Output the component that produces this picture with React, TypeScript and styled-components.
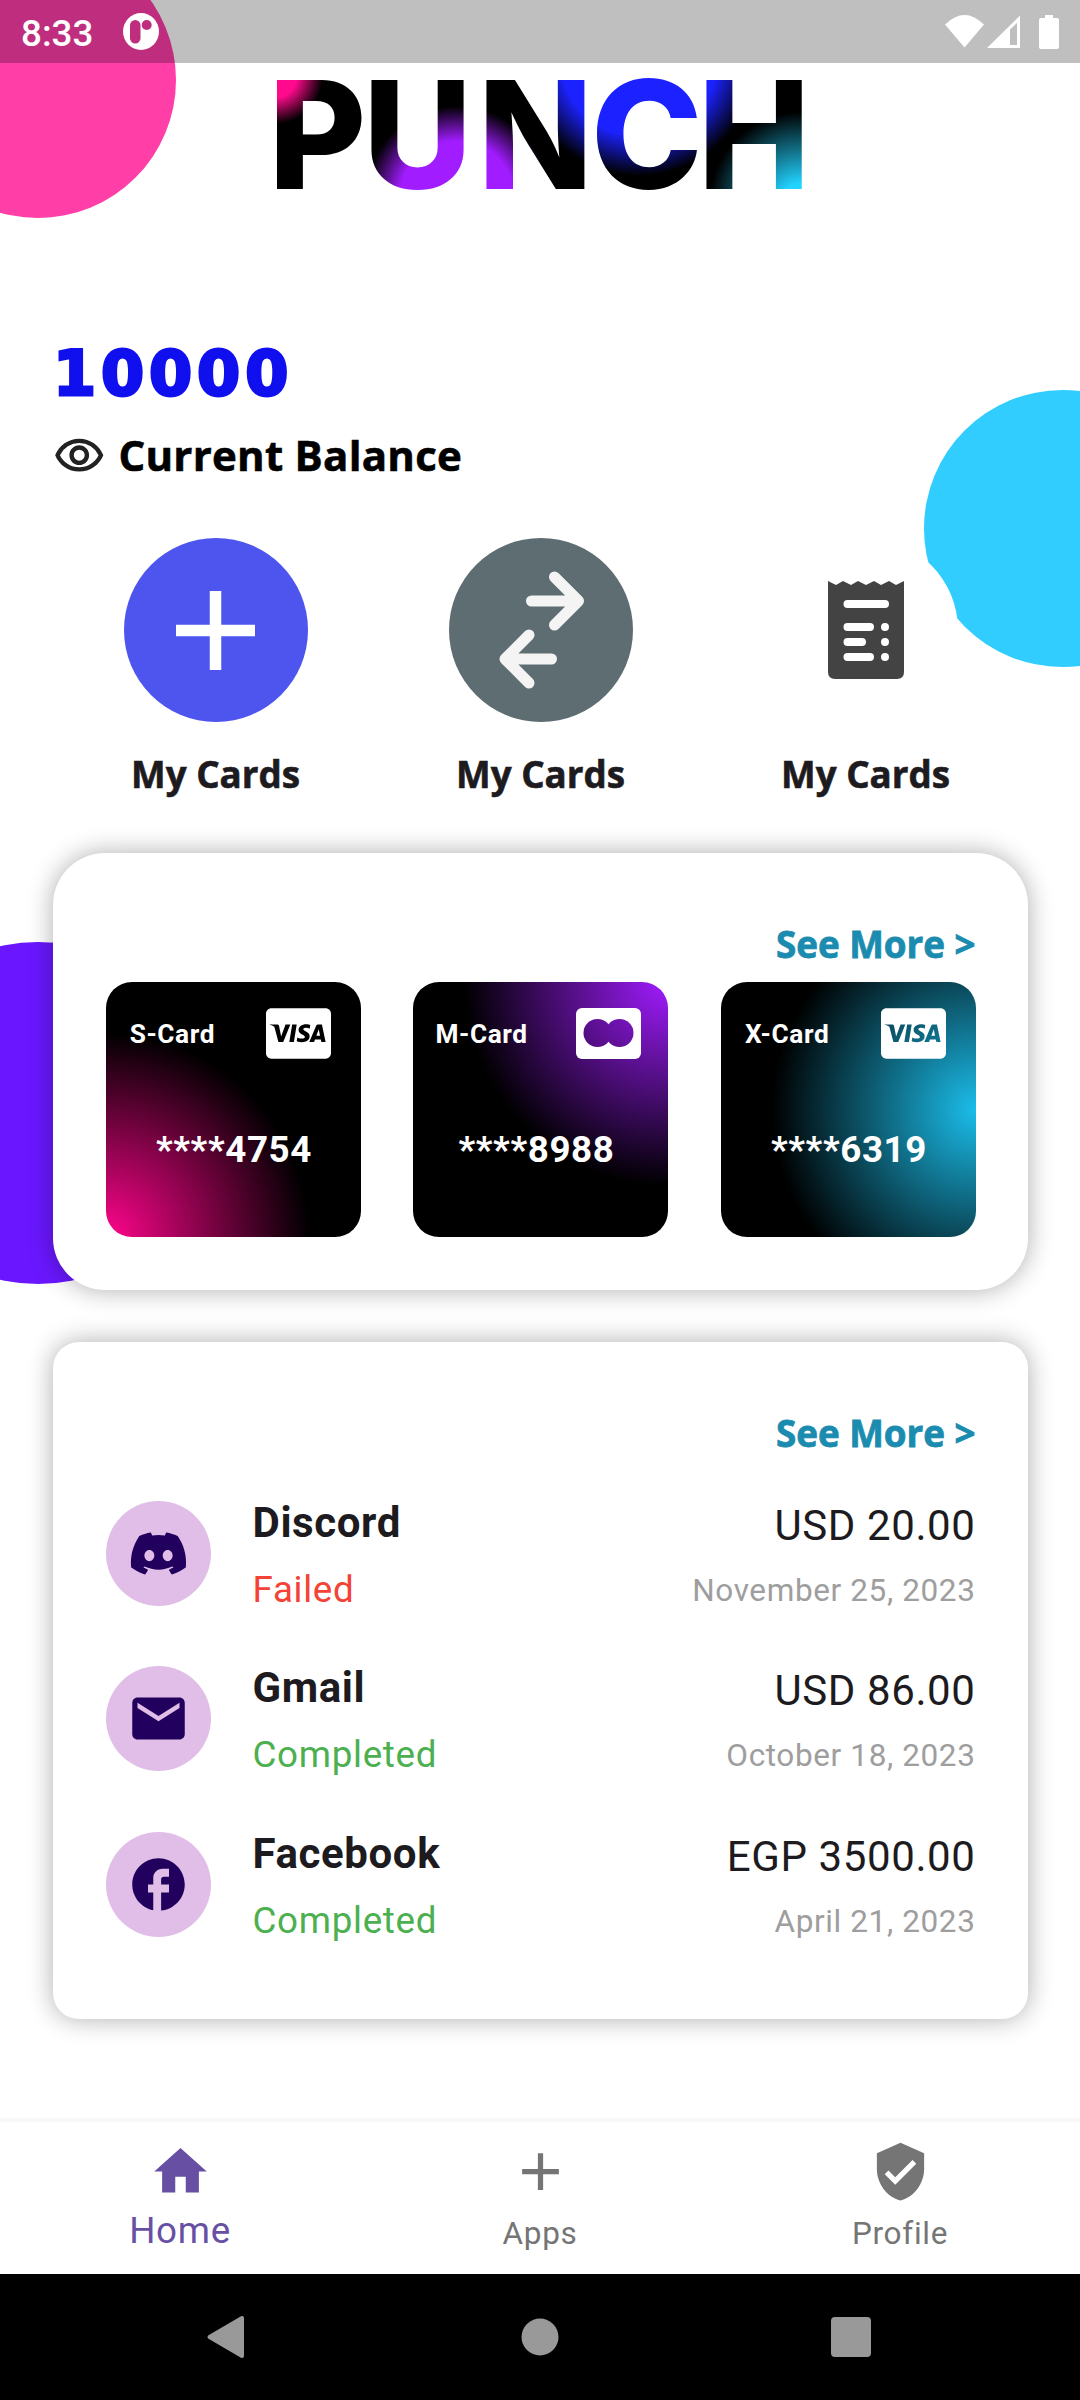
import React from "react";
import styled, { createGlobalStyle, css } from "styled-components";
import {
  MdAdd,
  MdEmail,
  MdFacebook,
  MdHome,
  MdOutlineVisibility,
  MdVerifiedUser,
} from "react-icons/md";
import { FaCcVisa } from "react-icons/fa";

const HEADING_FONT = `"Open Sans", Lato, sans-serif`;
const BODY_FONT = `Roboto, "Noto Sans", sans-serif`;

const GlobalStyle = createGlobalStyle`
  *, *::before, *::after { box-sizing: border-box; }
  body { margin: 0; background: #fff; }
`;

const Screen = styled.div`
  position: relative;
  display: flex;
  flex-direction: column;
  width: 1080px;
  height: 2400px;
  overflow: hidden;
  background: #fff;
  color: #1d1b20;
  font-family: ${BODY_FONT};
`;

const Blob = styled.div<{ $size: number; $x: number; $y: number; $color: string }>`
  position: absolute;
  left: ${(p) => p.$x}px;
  top: ${(p) => p.$y}px;
  width: ${(p) => p.$size}px;
  height: ${(p) => p.$size}px;
  border-radius: 50%;
  background: ${(p) => p.$color};
`;

const StatusBar = styled.header`
  position: relative;
  display: flex;
  align-items: center;
  height: 63px;
  padding: 0 20px 0 21px;
  background: rgba(0, 0, 0, 0.25);
`;

const Clock = styled.span`
  color: #fff;
  font-size: 36.75px;
  font-weight: 500;
  line-height: 43px;
  margin-top: 3px;
  width: 102px;
`;

const StatusIcons = styled.svg`
  margin-left: auto;
`;

const Content = styled.main`
  position: relative;
  display: flex;
  flex-direction: column;
  flex: 1;
  padding: 0 52px 0 53px;
`;

const Logo = styled.svg`
  display: block;
  align-self: center;
  margin-top: 1px;
  overflow: visible;
`;

const Balance = styled.div`
  margin-top: 126px;
  height: 98px;
  color: #100fee;
  font-family: "DejaVu Sans", sans-serif;
  font-weight: 700;
  font-size: 62px;
  letter-spacing: 4.9px;
  line-height: 88px;
  -webkit-text-stroke: 3px #100fee;
`;

const BalanceLabel = styled.div`
  display: flex;
  align-items: center;
  gap: 13px;
  height: 53px;
  color: #000;
  font-family: ${HEADING_FONT};
  font-weight: 700;
  font-size: 42px;
  line-height: 53px;
  letter-spacing: 0.25px;
  -webkit-text-stroke: 0.6px currentColor;

  svg {
    margin-top: 4px;
    color: #222;
    stroke: none;
  }
`;

const Actions = styled.div`
  display: grid;
  grid-template-columns: repeat(3, 1fr);
  margin-top: 57px;
`;

const Action = styled.div`
  display: flex;
  flex-direction: column;
  align-items: center;
  gap: 30px;
`;

const ActionCircle = styled.div<{ $color: string }>`
  display: flex;
  align-items: center;
  justify-content: center;
  width: 184px;
  height: 184px;
  border-radius: 50%;
  background: ${(p) => p.$color};
`;

const ActionLabel = styled.span`
  height: 44px;
  font-family: ${HEADING_FONT};
  font-weight: 700;
  font-size: 36.75px;
  line-height: 44px;
  -webkit-text-stroke: 0.6px currentColor;
`;

const Panel = styled.section<{ $radius: number }>`
  display: flex;
  flex-direction: column;
  padding: 0 52.5px;
  border-radius: ${(p) => p.$radius}px;
  background: #fff;
  box-shadow: 0 0 26px rgba(0, 0, 0, 0.32);
`;

const CardsPanel = styled(Panel)`
  margin-top: 57px;
  height: 437px;
`;

const HistoryPanel = styled(Panel)`
  margin-top: 52px;
  height: 677px;
`;

const SeeMore = styled.a`
  align-self: flex-end;
  margin-top: 69px;
  height: 44px;
  color: #1b8caf;
  font-family: ${HEADING_FONT};
  font-weight: 700;
  font-size: 36.75px;
  line-height: 44px;
  -webkit-text-stroke: 0.8px currentColor;
`;

const CardRow = styled.div`
  display: flex;
  justify-content: space-between;
  margin-top: 16px;
`;

const BankCard = styled.article<{ $origin: string; $color: string }>`
  display: flex;
  flex-direction: column;
  width: 255px;
  height: 255px;
  border-radius: 26px;
  background: radial-gradient(circle 204px at ${(p) => p.$origin}, ${(p) => p.$color}, #000);
  color: #fff;
  font-weight: 700;
`;

const CardHead = styled.div`
  display: flex;
  justify-content: space-around;
  align-items: center;
  height: 102px;
  padding-left: 2px;
`;

const CardName = styled.span`
  margin-top: 2px;
  font-size: 26.25px;
  letter-spacing: 0.6px;
`;

const Brand = styled.span`
  display: flex;
  justify-content: center;
  width: 79px;
`;

const CardNumber = styled.div<{ $shift: number }>`
  padding-right: ${(p) => p.$shift}px;
  padding-left: 2px;
  margin-top: 44px;
  font-size: 36.75px;
  line-height: 44px;
  letter-spacing: 0.6px;
  text-align: center;
`;

const TransactionList = styled.div`
  display: flex;
  flex-direction: column;
  gap: 60.4px;
  margin-top: 46px;
`;

const Transaction = styled.div`
  display: flex;
  height: 105px;
`;

const Avatar = styled.div`
  display: flex;
  align-items: center;
  justify-content: center;
  width: 105px;
  height: 105px;
  border-radius: 50%;
  background: #e1bee7;
  color: #22005d;
`;

const Details = styled.div<{ $end?: boolean }>`
  display: flex;
  flex-direction: column;
  ${(p) =>
    p.$end
      ? css`
          align-items: flex-end;
          margin-left: auto;
        `
      : css`
          margin-left: 42px;
        `}
`;

const Title = styled.span`
  font-size: 42px;
  font-weight: 700;
  line-height: 44px;
  letter-spacing: 0.6px;
`;

const Status = styled.span<{ $failed?: boolean }>`
  margin-top: 23px;
  color: ${(p) => (p.$failed ? "#f44336" : "#4caf50")};
  font-size: 36.75px;
  line-height: 44px;
  letter-spacing: 0.7px;
`;

const Amount = styled.span`
  margin-top: 3px;
  font-size: 42px;
  line-height: 44px;
  letter-spacing: 0.6px;
`;

const DateText = styled.span`
  margin-top: 21px;
  color: #9e9e9e;
  font-size: 31.5px;
  line-height: 44px;
  letter-spacing: 0.62px;
`;

const TabBar = styled.nav`
  position: relative;
  display: grid;
  grid-template-columns: repeat(3, 1fr);
  height: 156px;
  border-top: 4px solid #f8f8f8;
  background: #fff;
`;

const Tab = styled.div<{ $active?: boolean }>`
  display: flex;
  flex-direction: column;
  align-items: center;
  padding-top: 18px;
  color: ${(p) => (p.$active ? "#6750a4" : "#757575")};

  span {
    margin-top: 6px;
    font-size: ${(p) => (p.$active ? 36.75 : 31.5)}px;
    line-height: 44px;
    padding-top: ${(p) => (p.$active ? 0 : 3)}px;
    letter-spacing: 0.7px;
  }
`;

const SystemBar = styled.footer`
  position: relative;
  display: flex;
  justify-content: center;
  height: 126px;
  background: #000;
`;

function PunchLogo() {
  return (
    <Logo width="540" height="140" viewBox="270 64 540 140">
      <defs>
        <radialGradient id="pink" gradientUnits="userSpaceOnUse" cx="274" cy="76" r="48">
          <stop offset="0.45" stopColor="#ff0a8c" />
          <stop offset="1" stopColor="#ff0a8c" stopOpacity="0" />
        </radialGradient>
        <radialGradient id="violet" gradientUnits="userSpaceOnUse" cx="456" cy="198" r="92">
          <stop offset="0.62" stopColor="#a11cff" />
          <stop offset="1" stopColor="#a11cff" stopOpacity="0" />
        </radialGradient>
        <radialGradient id="blue" gradientUnits="userSpaceOnUse" cx="638" cy="58" r="118">
          <stop offset="0.66" stopColor="#1c22ff" />
          <stop offset="1" stopColor="#1c22ff" stopOpacity="0" />
        </radialGradient>
        <radialGradient id="cyan" gradientUnits="userSpaceOnUse" cx="800" cy="204" r="92">
          <stop offset="0.22" stopColor="#22d3ff" />
          <stop offset="1" stopColor="#22d3ff" stopOpacity="0" />
        </radialGradient>
        <pattern id="ink" patternUnits="userSpaceOnUse" x="260" y="0" width="560" height="260" viewBox="260 0 560 260">
          <rect x="260" y="0" width="560" height="260" fill="#000" />
          <rect x="260" y="0" width="560" height="260" fill="url(#pink)" />
          <rect x="260" y="0" width="560" height="260" fill="url(#violet)" />
          <rect x="260" y="0" width="560" height="260" fill="url(#blue)" />
          <rect x="260" y="0" width="560" height="260" fill="url(#cyan)" />
        </pattern>
      </defs>
      <text
        x="267.500 362 477 590 697"
        y="188.5"
        fontFamily="Inter, sans-serif"
        fontWeight="800"
        fontSize="150"
        fill="url(#ink)"
      >
        PUNCH
      </text>
    </Logo>
  );
}

function DiscordIcon({ size }: { size: number }) {
  return (
    <svg width={size} height={size} viewBox="0 0 24 24" fill="currentColor">
      <path d="M19.270 5.330C17.940 4.710 16.500 4.260 15 4a.09.09 0 0 0-.07.03c-.18.33-.39.76-.53 1.090a16.090 16.090 0 0 0-4.800 0c-.14-.34-.35-.76-.54-1.090-.01-.02-.04-.03-.07-.03-1.500.26-2.930.71-4.270 1.330-.01 0-.02.01-.03.02-2.720 4.070-3.470 8.030-3.100 11.950 0 .02.01.04.03.05 1.800 1.320 3.530 2.120 5.240 2.650.03.01.06 0 .07-.02.4-.55.76-1.130 1.070-1.740.02-.04 0-.08-.04-.09-.57-.22-1.110-.48-1.640-.78-.04-.02-.04-.08-.01-.11.11-.08.22-.17.33-.25.02-.02.05-.02.07-.01 3.440 1.570 7.150 1.570 10.550 0 .02-.01.05-.01.07.01.11.09.22.17.33.26.04.03.04.09-.01.11-.52.31-1.070.56-1.640.78-.04.01-.05.06-.04.09.32.61.68 1.190 1.070 1.740.03.01.06.02.09.01 1.720-.53 3.450-1.330 5.250-2.650.02-.01.03-.03.03-.05.44-4.530-.73-8.460-3.100-11.950-.01-.01-.02-.02-.04-.02zM8.520 14.910c-1.030 0-1.890-.95-1.890-2.120s.84-2.120 1.890-2.120c1.060 0 1.900.96 1.890 2.120 0 1.170-.84 2.120-1.890 2.120zm6.970 0c-1.030 0-1.890-.95-1.890-2.120s.84-2.120 1.890-2.120c1.060 0 1.900.96 1.890 2.120 0 1.170-.83 2.120-1.890 2.120z" />
    </svg>
  );
}

function TransferIcon() {
  return (
    <svg width="92" height="124" viewBox="494 568.500 92 124" fill="none" stroke="#f4f4f4" strokeWidth="11" strokeLinecap="round" strokeLinejoin="round">
      <path d="M530.500 601.500H577M553.500 577.500L577.500 601.500L553.500 625.500" />
      <path d="M550.500 659.500H504M528 635.500L504 659.500L528 683.500" />
    </svg>
  );
}

function ReceiptIcon() {
  return (
    <svg width="76" height="98" viewBox="0 0 76 98">
      <path
        d="M0 0L8 4L15 0L23 4L30 0L38 4L46 0L53 4L61 0L68 4L76 0V91Q76 98 69 98H7Q0 98 0 91Z"
        fill="#434343"
      />
      <g stroke="#fff" strokeWidth="8" strokeLinecap="round">
        <path d="M19.500 23H57M19.500 46H42M19.500 61H34M19.500 76H42M57 46V46.010M57 61V61.010M57 76V76.010" />
      </g>
    </svg>
  );
}

function PairIcon({ id }: { id: string }) {
  return (
    <svg width="65" height="51" viewBox="0 0 65 51">
      <mask id={id}>
        <rect width="65" height="51" rx="6" fill="#fff" />
        <circle cx="21.500" cy="25" r="14" fill="#000" />
        <circle cx="43.500" cy="25" r="14" fill="#000" />
      </mask>
      <rect width="65" height="51" fill="#fff" mask={`url(#${id})`} />
    </svg>
  );
}

const cards = [
  { name: "S-Card", number: "****4754", origin: "0% 100%", color: "#ff058c", visa: true, shift: 0 },
  { name: "M-Card", number: "****8988", origin: "100% 0%", color: "#a11cff", visa: false, shift: 10 },
  { name: "X-Card", number: "****6319", origin: "100% 50%", color: "#1bbdea", visa: true, shift: 0 },
];

const transactions = [
  { icon: DiscordIcon, name: "Discord", status: "Failed", amount: "USD 20.00", date: "November 25, 2023" },
  { icon: MdEmail, name: "Gmail", status: "Completed", amount: "USD 86.00", date: "October 18, 2023" },
  { icon: MdFacebook, name: "Facebook", status: "Completed", amount: "EGP 3500.00", date: "April 21, 2023" },
];

const tabs = [
  { icon: MdHome, label: "Home" },
  { icon: MdAdd, label: "Apps" },
  { icon: MdVerifiedUser, label: "Profile" },
];

export default function App() {
  return (
    <Screen>
      <GlobalStyle />
      <Blob $size={276} $x={-100} $y={-58} $color="#ff3ea8" />
      <Blob $size={277} $x={924} $y={390} $color="#32cdff" />
      <Blob $size={342} $x={-133} $y={942} $color="#6a17ff" />

      <StatusBar>
        <Clock>8:33</Clock>
        <svg width="36" height="37" viewBox="0 0 36 37">
          <ellipse cx="18" cy="18.500" rx="18" ry="18.500" fill="#fff" />
          <rect x="7" y="7" width="10.500" height="23.500" rx="5.250" fill="#bf2e7e" />
          <circle cx="23.700" cy="12" r="5" fill="#bf2e7e" />
        </svg>
        <StatusIcons width="116" height="36" viewBox="944 13 116 36" fill="#fff">
          <path d="M945 23.500Q964.500 4.500 984 23.500L964.500 46.500Z" />
          <path fillRule="evenodd" d="M987 47L1020 14.500V47ZM1010 28.500V44H1017V22Z" />
          <path d="M1045 14H1053V17H1057Q1059 17 1059 19V46Q1059 48 1057 48H1041Q1039 48 1039 46V19Q1039 17 1041 17H1045Z" />
        </StatusIcons>
      </StatusBar>

      <Content>
        <PunchLogo />
        <Balance>10000</Balance>
        <BalanceLabel>
          <MdOutlineVisibility size={52.5} />
          Current Balance
        </BalanceLabel>

        <Actions>
          <Action>
            <ActionCircle $color="#4e54ee">
              <svg width="79" height="79" viewBox="0 0 79 79" stroke="#fff" strokeWidth="11.500">
                <path d="M39.500 0V79M0 39.500H79" />
              </svg>
            </ActionCircle>
            <ActionLabel>My Cards</ActionLabel>
          </Action>
          <Action>
            <ActionCircle $color="#5d6d71">
              <TransferIcon />
            </ActionCircle>
            <ActionLabel>My Cards</ActionLabel>
          </Action>
          <Action>
            <ActionCircle $color="#fff">
              <ReceiptIcon />
            </ActionCircle>
            <ActionLabel>My Cards</ActionLabel>
          </Action>
        </Actions>

        <CardsPanel $radius={52}>
          <SeeMore>See More &gt;</SeeMore>
          <CardRow>
            {cards.map((card) => (
              <BankCard key={card.name} $origin={card.origin} $color={card.color}>
                <CardHead>
                  <CardName>{card.name}</CardName>
                  <Brand>{card.visa ? <FaCcVisa size={65} /> : <PairIcon id="pair" />}</Brand>
                </CardHead>
                <CardNumber $shift={card.shift}>{card.number}</CardNumber>
              </BankCard>
            ))}
          </CardRow>
        </CardsPanel>

        <HistoryPanel $radius={26}>
          <SeeMore>See More &gt;</SeeMore>
          <TransactionList>
            {transactions.map(({ icon: Icon, name, status, amount, date }) => (
              <Transaction key={name}>
                <Avatar>
                  <Icon size={63} />
                </Avatar>
                <Details>
                  <Title>{name}</Title>
                  <Status $failed={status === "Failed"}>{status}</Status>
                </Details>
                <Details $end>
                  <Amount>{amount}</Amount>
                  <DateText>{date}</DateText>
                </Details>
              </Transaction>
            ))}
          </TransactionList>
        </HistoryPanel>
      </Content>

      <TabBar>
        {tabs.map(({ icon: Icon, label }, index) => (
          <Tab key={label} $active={index === 0}>
            <Icon size={63} />
            <span>{label}</span>
          </Tab>
        ))}
      </TabBar>

      <SystemBar>
        <svg width="1080" height="126" viewBox="0 2274 1080 126" fill="#999">
          <path d="M242 2318V2356L209.500 2337Z" stroke="#999" strokeWidth="4" strokeLinejoin="round" />
          <circle cx="540" cy="2337" r="18.500" />
          <rect x="831" y="2317" width="40" height="40" rx="4" />
        </svg>
      </SystemBar>
    </Screen>
  );
}
